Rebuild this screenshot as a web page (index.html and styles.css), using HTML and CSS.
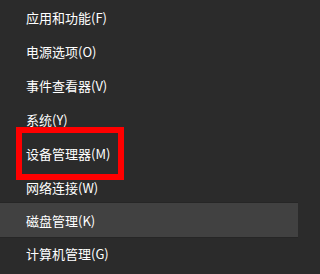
FILE: index.html
```html
<!DOCTYPE html>
<html lang="zh-CN">
<head>
<meta charset="utf-8">
<link rel="stylesheet" href="styles.css">
</head>
<body>
<div class="menu">
  <div class="item">应用和功能(F)</div>
  <div class="item">电源选项(O)</div>
  <div class="item">事件查看器(V)</div>
  <div class="item">系统(Y)</div>
  <div class="item">设备管理器(M)</div>
  <div class="item">网络连接(W)</div>
  <div class="item hover">磁盘管理(K)</div>
  <div class="item">计算机管理(G)</div>
  <div class="highlight"></div>
</div>
</body>
</html>
```
FILE: styles.css
```css
html, body {
  margin: 0;
  padding: 0;
  background: #2b2b2b;
}
.menu {
  position: relative;
  width: 298px;
  height: 274px;
  overflow: hidden;
  display: flex;
  flex-direction: column;
  font-family: "Noto Sans CJK SC", "Noto Sans", sans-serif;
  font-size: 13px;
  color: #ffffff;
}
.item {
  height: 34px;
  flex: none;
  display: flex;
  align-items: center;
  padding-left: 26px;
  box-sizing: border-box;
}
.item.hover {
  background: #414141;
  border-top: 1px solid #262626;
  border-bottom: 1px solid #262626;
  margin-top: -2px;
  height: 36px;
  margin-bottom: -2px;
}
.highlight {
  position: absolute;
  left: 16px;
  top: 127px;
  width: 108px;
  height: 53px;
  box-sizing: border-box;
  border: 6px solid #ff0000;
}
```
